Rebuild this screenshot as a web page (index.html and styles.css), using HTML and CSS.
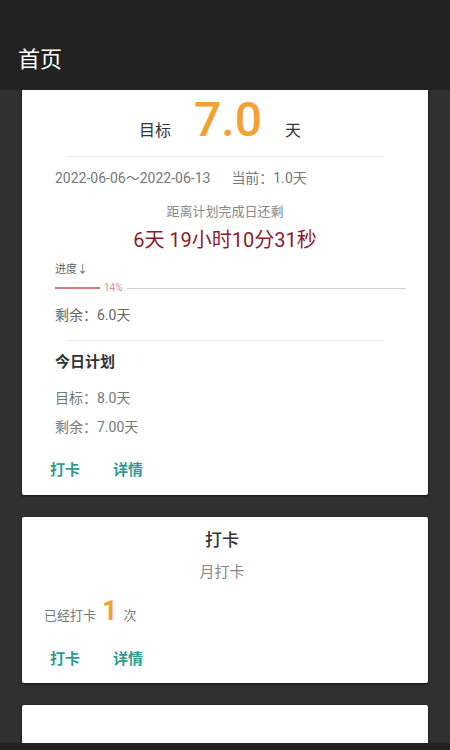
FILE: index.html
```html
<!DOCTYPE html>
<html lang="zh-CN">
<head>
<meta charset="utf-8">
<title>首页</title>
<link rel="stylesheet" href="styles.css">
</head>
<body>
<div class="app">
  <header class="appbar">
    <div class="toolbar"><h1 class="title">首页</h1></div>
  </header>
  <main class="main">
    <div class="scroll">
      <section class="card card-plan">
        <div class="target-row">
          <span class="target-label">目标</span>
          <span class="target-num">7.0</span>
          <span class="target-unit">天</span>
        </div>
        <div class="divider"></div>
        <div class="date-line"><span>2022-06-06～2022-06-13</span><span class="current">当前：1.0天</span></div>
        <div class="remain-label">距离计划完成日还剩</div>
        <div class="countdown">6天 19小时10分31秒</div>
        <div class="progress-label">进度↓</div>
        <div class="progress">
          <span class="bar-done"></span>
          <span class="bar-pct">14%</span>
          <span class="bar-rest"></span>
        </div>
        <div class="info-line first">剩余：6.0天</div>
        <div class="divider divider-2"></div>
        <div class="today-title">今日计划</div>
        <div class="info-line today-1">目标：8.0天</div>
        <div class="info-line today-2">剩余：7.00天</div>
        <div class="actions actions-1"><span class="btn">打卡</span><span class="btn">详情</span></div>
      </section>
      <section class="card card-check">
        <div class="check-title">打卡</div>
        <div class="check-sub">月打卡</div>
        <div class="check-count"><span class="cc-text">已经打卡</span><span class="cc-num">1</span><span class="cc-text">次</span></div>
        <div class="actions actions-2"><span class="btn">打卡</span><span class="btn">详情</span></div>
      </section>
      <section class="card card-third"></section>
    </div>
  </main>
  <div class="bottombar"></div>
</div>
</body>
</html>
```

FILE: styles.css
```css
* { box-sizing: border-box; }
html, body { margin: 0; padding: 0; }
body {
  font-family: Roboto, "Noto Sans CJK SC", "Noto Sans", sans-serif;
  background: #303030;
  color: #333;
}
.app {
  width: 450px;
  height: 750px;
  display: flex;
  flex-direction: column;
  overflow: hidden;
}
.appbar {
  background: #222222;
  height: 90px;
  padding-top: 24px;
  flex: none;
  position: relative;
  z-index: 2;
}
.toolbar {
  height: 66px;
  display: flex;
  align-items: center;
  padding-left: 18px;
}
.title {
  margin: 0;
  color: #fff;
  font-size: 22px;
  font-weight: 400;
}
.main {
  flex: 1;
  overflow: hidden;
  background: #303030;
}
.scroll {
  margin-top: -20px;
  padding: 0 22px;
  display: flex;
  flex-direction: column;
  gap: 22px;
}
.card {
  background: #fff;
  border-radius: 2px;
  box-shadow: 0 1px 3px rgba(0,0,0,0.6);
}
.card-plan {
  padding: 22px 33px 15px;
}
.target-row {
  display: flex;
  justify-content: center;
  align-items: baseline;
  height: 56px;
  padding-right: 10px;
}
.target-label, .target-unit {
  font-size: 16px;
  color: #333;
}
.target-num {
  font-size: 48px;
  line-height: 56px;
  font-weight: 500;
  color: #f2a235;
  margin: 0 23px;
}
.divider {
  height: 1px;
  background: #ececec;
  margin: 8px 11px 0;
}
.divider-2 { margin-top: 15px; }
.date-line {
  margin-top: 11px;
  font-size: 14px;
  line-height: 20px;
  color: #777;
  display: flex;
  gap: 21px;
}
.remain-label {
  margin-top: 14px;
  font-size: 13px;
  line-height: 20px;
  color: #888;
  text-align: center;
}
.countdown {
  margin-top: 4px;
  font-size: 20px;
  line-height: 28px;
  color: #8c1b2f;
  text-align: center;
}
.progress-label {
  margin-top: 8px;
  font-size: 11px;
  line-height: 16px;
  color: #666;
}
.progress {
  margin-top: 2px;
  margin-right: -11px;
  height: 16px;
  display: flex;
  align-items: center;
}
.bar-done {
  width: 45px;
  height: 2px;
  background: #cf7b7b;
}
.bar-pct {
  font-size: 10px;
  color: #d98e8e;
  margin: 0 4px;
  line-height: 16px;
}
.bar-rest {
  flex: 1;
  height: 1px;
  background: #cfcfcf;
}
.info-line {
  font-size: 14px;
  line-height: 20px;
  color: #666;
}
.info-line.first { margin-top: 9px; }
.today-title {
  margin-top: 10px;
  font-size: 15px;
  line-height: 22px;
  font-weight: 700;
  color: #333;
}
.info-line.today-1 { margin-top: 15px; color: #777; }
.info-line.today-2 { margin-top: 9px; color: #777; }
.actions {
  display: flex;
  gap: 33px;
  font-size: 15px;
  line-height: 20px;
  font-weight: 700;
  color: #2e9c93;
}
.actions-1 { margin-top: 23px; margin-left: -5px; }
.card-check {
  padding: 11px 28px 14px 22px;
}
.check-title {
  text-align: center;
  font-size: 17px;
  line-height: 24px;
  font-weight: 500;
  color: #333;
}
.check-sub {
  margin-top: 9px;
  text-align: center;
  font-size: 15px;
  line-height: 22px;
  color: #888;
}
.check-count {
  margin-top: 13px;
  display: flex;
  align-items: baseline;
  height: 30px;
}
.cc-text {
  font-size: 13px;
  color: #777;
}
.cc-num {
  font-size: 27px;
  line-height: 30px;
  font-weight: 700;
  color: #f2a235;
  margin: 0 6px 0 6px;
}
.actions-2 { margin-top: 23px; margin-left: 6px; }
.card-third {
  height: 80px;
  flex: none;
}
.bottombar {
  height: 7px;
  background: #222;
  flex: none;
}
```
